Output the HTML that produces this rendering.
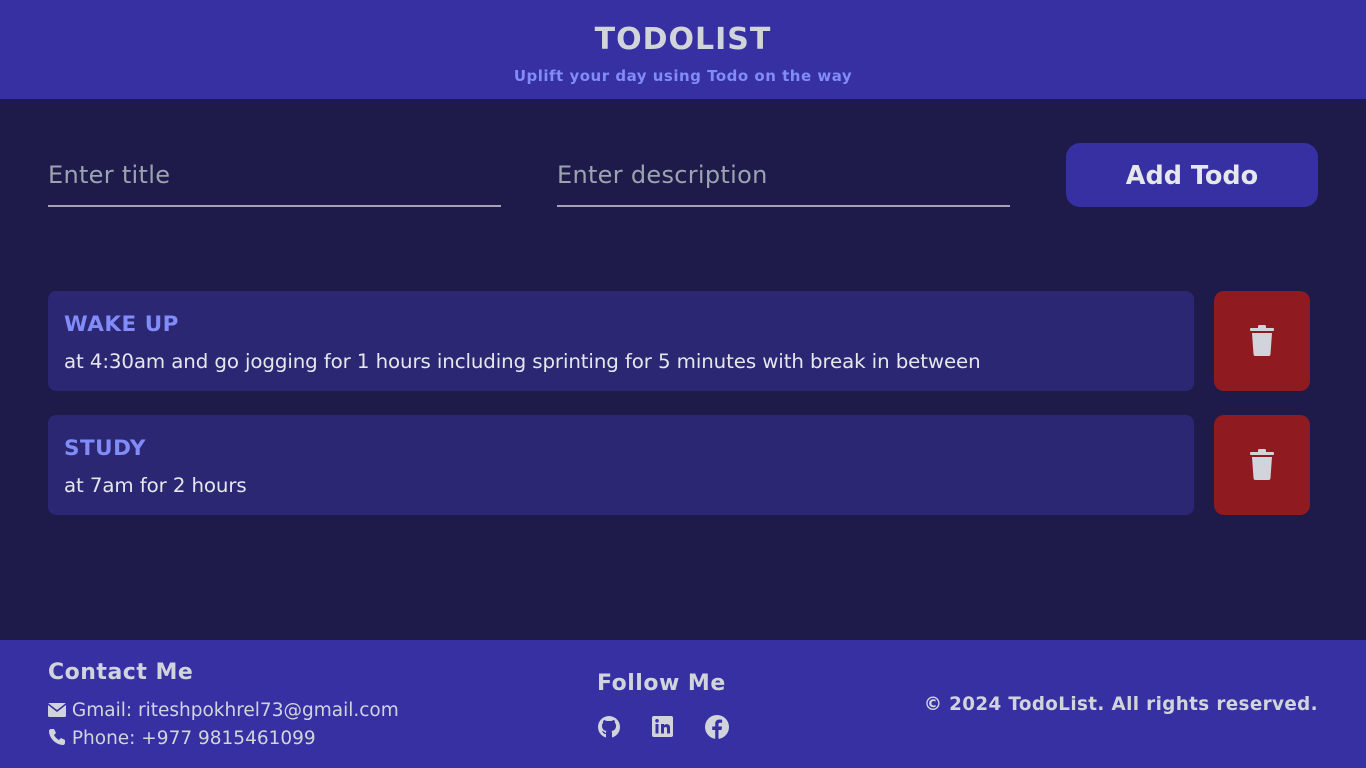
<!DOCTYPE html>
<html><head><meta charset="utf-8"><style>
*{margin:0;padding:0;box-sizing:border-box}
body{width:1366px;height:768px;background:#1e1b4b;font-family:"DejaVu Sans","Liberation Sans",sans-serif;color:#d1d5db;position:relative;overflow:hidden}
header{position:absolute;left:0;top:0;width:1366px;height:99px;background:#3730a3;text-align:center}
header h1{position:absolute;width:100%;top:22px;font-size:30px;font-weight:bold;letter-spacing:1px;color:#d1d5db}
header p{position:absolute;width:100%;top:67px;font-size:15px;font-weight:bold;color:#818cf8;letter-spacing:.5px}
.inp{position:absolute;top:161px;height:46px;border-bottom:2px solid #a5a3b8;font-size:24px;color:#9ca3af;padding-left:0;letter-spacing:.3px}
.btn{position:absolute;left:1066px;top:143px;width:252px;height:64px;background:#3730a3;border-radius:14px;text-align:center;line-height:66px;font-size:25.5px;font-weight:bold;color:#e5e7eb}
.card{position:absolute;left:48px;width:1146px;height:100px;background:#2b2772;border-radius:8px}
.card h3{position:absolute;left:16px;top:21px;font-size:21.5px;font-weight:bold;color:#818cf8;letter-spacing:.5px}
.card p{position:absolute;left:16px;top:59px;font-size:19.8px;color:#e5e7eb;white-space:nowrap;letter-spacing:-.1px}
.del{position:absolute;left:1214px;width:96px;height:100px;background:#8f1b20;border-radius:10px}
.del svg{position:absolute;left:34px;top:34px}
footer{position:absolute;left:0;top:640px;width:1366px;height:128px;background:#3730a3}
.f{position:absolute;white-space:nowrap}
</style></head><body>
<header><h1>TODOLIST</h1><p>Uplift your day using Todo on the way</p></header>
<div class="inp" style="left:48px;width:453px">Enter title</div>
<div class="inp" style="left:557px;width:453px">Enter description</div>
<div class="btn">Add Todo</div>
<div class="card" style="top:291px"><h3>WAKE UP</h3><p>at 4:30am and go jogging for 1 hours including sprinting for 5 minutes with break in between</p></div>
<div class="del" style="top:291px"><svg width="28" height="32" viewBox="0 0 28 32"><rect x="2" y="3" width="24" height="3" rx="1" fill="#d1d5db"/><rect x="10" y="0" width="8" height="4" rx="1.5" fill="#d1d5db"/><path d="M4 8h20l-1.5 21a2 2 0 0 1-2 2H7.5a2 2 0 0 1-2-2z" fill="#d1d5db"/></svg></div>
<div class="card" style="top:415px"><h3>STUDY</h3><p>at 7am for 2 hours</p></div>
<div class="del" style="top:415px"><svg width="28" height="32" viewBox="0 0 28 32"><rect x="2" y="3" width="24" height="3" rx="1" fill="#d1d5db"/><rect x="10" y="0" width="8" height="4" rx="1.5" fill="#d1d5db"/><path d="M4 8h20l-1.5 21a2 2 0 0 1-2 2H7.5a2 2 0 0 1-2-2z" fill="#d1d5db"/></svg></div>
<footer>
<div class="f" style="left:48px;top:20px;font-size:22px;font-weight:bold;letter-spacing:.5px">Contact Me</div>
<div class="f" style="left:48px;top:60px;font-size:18.5px">
<svg width="18" height="14" viewBox="0 0 18 14" style="vertical-align:-1px"><rect x="0" y="0" width="18" height="14" rx="1.5" fill="#d1d5db"/><path d="M0 1l9 7 9-7" stroke="#3730a3" stroke-width="1.6" fill="none"/></svg> Gmail: riteshpokhrel73@gmail.com</div>
<div class="f" style="left:48px;top:88px;font-size:18.5px">
<svg width="18" height="18" viewBox="0 0 18 18" style="vertical-align:-2px"><path d="M3 1l3 0 2 4-2 2c1 2 3 4 5 5l2-2 4 2v3c0 1-1 2-2 2C8 17 1 10 1 3c0-1 1-2 2-2z" fill="#d1d5db"/></svg> Phone: +977 9815461099</div>
<div class="f" style="left:597px;top:31px;font-size:22px;font-weight:bold;letter-spacing:.5px">Follow Me</div>
<svg class="f" style="left:597px;top:75px" width="24" height="24" viewBox="0 0 24 24"><circle cx="12" cy="12" r="11" fill="#d1d5db"/><path d="M9 23v-4c-2 0-3-1-4-3 2 0 3 2 4 2 0-1 0-2 1-2-3 0-5-2-5-5 0-1 0-2 1-3 0-1 0-2 1-3 1 0 2 1 3 1h4c1 0 2-1 3-1 1 1 1 2 1 3 1 1 1 2 1 3 0 3-2 5-5 5 1 0 1 1 1 2v5z" fill="#3730a3"/></svg>
<svg class="f" style="left:652px;top:76px" width="21" height="21" viewBox="0 0 21 21"><rect width="21" height="21" rx="2" fill="#d1d5db"/><rect x="3.5" y="8" width="3" height="9.5" fill="#3730a3"/><circle cx="5" cy="4.8" r="1.8" fill="#3730a3"/><path d="M9 8h3v1.5c1-2 6-2 6 2v6h-3v-5c0-2-3-2-3 0v5H9z" fill="#3730a3"/></svg>
<svg class="f" style="left:705px;top:75px" width="24" height="24" viewBox="0 0 24 24"><circle cx="12" cy="12" r="12" fill="#d1d5db"/><path d="M13.5 24v-9h3l.5-3.5h-3.5V9.5c0-1 .3-1.7 1.8-1.7h1.8V4.7c-.3 0-1.4-.2-2.6-.2-2.6 0-4.3 1.6-4.3 4.4v2.6H7.2V15h3v9z" fill="#3730a3"/></svg>
<div class="f" style="right:48px;top:54px;font-size:18.3px;font-weight:bold;letter-spacing:.4px">© 2024 TodoList. All rights reserved.</div>
</footer>
</body></html>
